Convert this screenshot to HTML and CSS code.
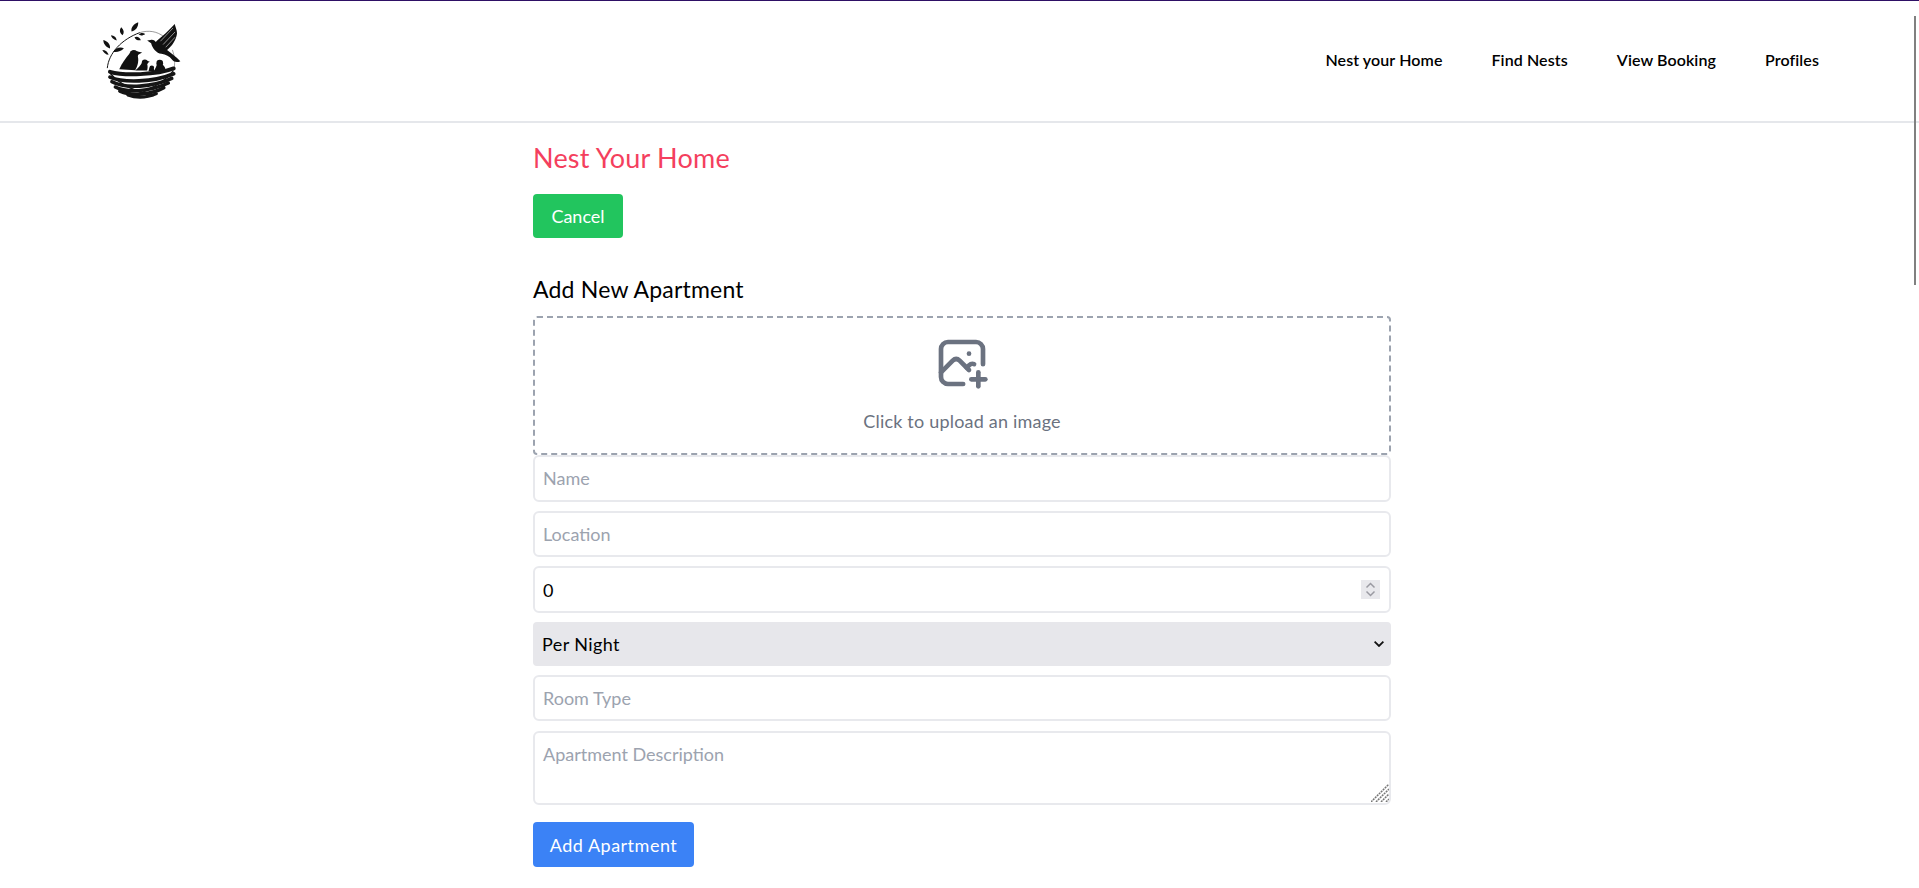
FILE: index.html
```html
<!DOCTYPE html>
<html lang="en">
<head>
    <meta charset="UTF-8">
    <meta name="viewport" content="width=device-width, initial-scale=1.0">
    <title>Nest Your Home</title>
    <link rel="stylesheet" href="styles.css">
</head>
<body>
    <div class="scroll-thumb"></div>
    <header class="site-header">
        <a class="logo" href="#">
            <svg viewBox="120 60 250 250" width="83" height="83">
                <!-- branch and circle outline -->
                <path d="M142 205C146 160 185 118 240 98" fill="none" stroke="#111" stroke-width="3"/>
                <path d="M240 98C266 90 292 94 312 110" fill="none" stroke="#333" stroke-width="1.5"/>
                <path d="M338 150C345 170 347 190 342 212" fill="none" stroke="#444" stroke-width="1.5"/>
                <g fill="#111">
                    <path d="M215 95C212 82 222 72 235 67C236 80 228 92 215 95Z"/>
                    <path d="M188 106C178 98 178 90 184 82C192 90 194 98 188 106Z"/>
                    <path d="M170 122C160 118 154 112 153 106C162 107 170 112 170 122Z"/>
                    <path d="M150 146C136 140 130 130 130 120C142 124 152 132 150 146Z"/>
                    <path d="M146 165C138 164 130 158 127 150C136 150 144 156 146 165Z"/>
                    <path d="M160 156C166 146 178 140 192 145C184 154 172 158 160 156Z"/>
                    <path d="M224 112C232 108 240 112 243 121C234 122 227 120 224 112Z"/>
                    <path d="M236 104C242 98 250 98 256 102C250 107 242 108 236 104Z"/>
                    <!-- flying bird -->
                    <path d="M262 122L272 120C278 118 284 120 288 126C298 116 320 100 345 72C346 78 352 90 352 100C350 120 336 140 322 150C332 158 350 170 362 184C350 190 340 184 336 178C330 170 318 164 305 162C290 160 278 146 274 130Z"/>
                    <!-- parent -->
                    <circle cx="222" cy="163" r="13"/>
                    <path d="M230 154L247 158L231 167Z"/>
                    <path d="M210 160C198 174 186 190 178 208L226 211C236 194 237 178 233 168Z"/>
                    <!-- chicks -->
                    <circle cx="255" cy="188" r="9"/>
                    <path d="M260 182L270 186L260 192Z"/>
                    <path d="M248 186C242 198 234 206 226 212H262C264 204 264 198 262 194Z"/>
                    <circle cx="276" cy="204" r="7"/>
                    <path d="M269 204L266 214H284L282 206Z"/>
                    <circle cx="300" cy="190" r="10"/>
                    <path d="M292 192C290 200 286 208 282 214H318C318 206 314 198 308 194Z"/>
                </g>
                <g fill="none" stroke="#fff" stroke-width="1.6">
                    <path d="M302 124L340 84"/>
                    <path d="M310 134L346 96"/>
                    <path d="M318 142L346 112"/>
                </g>
                <!-- nest -->
                <g fill="none" stroke="#151515" stroke-linecap="round">
                    <path d="M150 216C190 228 290 226 342 206" stroke-width="12"/>
                    <path d="M150 232C190 250 280 248 342 222" stroke-width="11"/>
                    <path d="M156 246C196 268 280 262 336 236" stroke-width="11"/>
                    <path d="M166 262C200 280 270 276 326 250" stroke-width="10"/>
                    <path d="M180 274C220 292 280 282 312 264" stroke-width="11"/>
                    <path d="M204 286C230 296 262 294 290 282" stroke-width="9"/>
                    <path d="M152 222C180 256 230 276 280 288" stroke-width="4"/>
                    <path d="M340 214C310 250 260 276 220 288" stroke-width="4"/>
                </g>
            </svg>
        </a>
        <nav class="nav-links">
            <a href="#">Nest your Home</a>
            <a href="#">Find Nests</a>
            <a href="#">View Booking</a>
            <a href="#">Profiles</a>
        </nav>
    </header>

    <main class="container">
        <h1 class="page-title">Nest Your Home</h1>
        <button class="btn btn-green" type="button">Cancel</button>

        <h2 class="form-title">Add New Apartment</h2>
        <form class="apartment-form">
            <label class="upload-box">
                <svg class="upload-icon" viewBox="0 0 24 24" fill="none" stroke="currentColor" stroke-width="2" stroke-linecap="round" stroke-linejoin="round">
                    <path d="M15 8h.01"/>
                    <path d="M12.5 21h-6.5a3 3 0 0 1 -3 -3v-12a3 3 0 0 1 3 -3h12a3 3 0 0 1 3 3v6.5"/>
                    <path d="M3 16l5 -5c.928 -.893 2.072 -.893 3 0l4 4"/>
                    <path d="M14 14l1 -1c.67 -.644 1.45 -.824 2.182 -.54"/>
                    <path d="M16 19h6"/>
                    <path d="M19 16v6"/>
                </svg>
                <span>Click to upload an image</span>
            </label>
            <input class="field" type="text" placeholder="Name">
            <input class="field" type="text" placeholder="Location">
            <div class="field-wrap">
                <input class="field field-number" type="number" value="0">
                <span class="spinner">
                    <svg viewBox="0 0 19 19" width="19" height="19" fill="none" stroke="#9a9aa2" stroke-width="1.5">
                        <path d="M5.5 7.5L9.5 3.5L13.5 7.5"/>
                        <path d="M5.5 11.5L9.5 15.5L13.5 11.5"/>
                    </svg>
                </span>
            </div>
            <div class="field-wrap">
                <select class="field-select">
                    <option>Per Night</option>
                    <option>Per Month</option>
                </select>
                <svg class="select-arrow" viewBox="0 0 10 6" width="10" height="6" fill="none" stroke="#111" stroke-width="1.8">
                    <path d="M0.6 0.7L5 5L9.4 0.7"/>
                </svg>
            </div>
            <input class="field" type="text" placeholder="Room Type">
            <div class="field-wrap area-wrap">
                <textarea class="field field-area" placeholder="Apartment Description"></textarea>
                <svg class="area-grip" viewBox="0 0 18 18" width="18" height="18" fill="none" stroke="#777" stroke-width="1.5" stroke-dasharray="2 0.8">
                    <path d="M0 18L18 0"/>
                    <path d="M5 18L18 5"/>
                    <path d="M10 18L18 10"/>
                    <path d="M15 18L18 15"/>
                </svg>
            </div>
            <button class="btn btn-blue" type="button">Add Apartment</button>
        </form>
    </main>
</body>
</html>
```

FILE: styles.css
```css
* {
    box-sizing: border-box;
}

body {
    margin: 0;
    min-height: 2880px;
    background: white;
    color: black;
    font-family: "Lato", "Noto Sans", sans-serif;
    font-size: 18px;
    letter-spacing: 0.2px;
    border-top: 1px solid #2e1065;
}

.scroll-thumb {
    position: fixed;
    top: 16px;
    right: 3px;
    width: 2px;
    height: 269px;
    background: #808080;
}

.site-header {
    display: flex;
    align-items: center;
    justify-content: space-between;
    height: 122px;
    padding: 0 100px 2px 100px;
    border-bottom: 2px solid #e5e7eb;
}

.logo {
    display: block;
    height: 83px;
    margin-top: 2px;
}

.logo svg {
    filter: blur(0.4px);
}

.nav-links {
    display: flex;
    gap: 49px;
    margin-bottom: 2px;
}

.nav-links a {
    color: black;
    text-decoration: none;
    font-size: 16px;
    font-weight: 600;
    letter-spacing: 0.1px;
}

.container {
    width: 858px;
    margin-left: 533px;
    padding-top: 19px;
}

.page-title {
    margin: 0;
    color: #f43f5e;
    font-size: 27px;
    font-weight: 400;
    line-height: 32px;
}

.btn {
    display: block;
    padding: 0;
    border: none;
    border-radius: 4px;
    color: white;
    font: inherit;
}

.btn-green {
    width: 90px;
    height: 44px;
    margin-top: 20px;
    background: #22c55e;
}

.btn-blue {
    width: 161px;
    height: 45px;
    margin-top: 8px;
    background: #3b82f6;
    letter-spacing: 0.5px;
}

.form-title {
    margin: 39px 0 15px;
    font-size: 23px;
    font-weight: 400;
    line-height: 24px;
}

.apartment-form {
    display: flex;
    flex-direction: column;
    gap: 9px;
}

.upload-box {
    display: flex;
    flex-direction: column;
    align-items: center;
    height: 139px;
    margin-bottom: -9px;
    padding-top: 17px;
    border: 2px dashed #9ca3af;
    border-radius: 4px;
    color: #6b7280;
}

.upload-icon {
    width: 56px;
    height: 56px;
}

.upload-box span {
    margin-top: 19px;
}

.field {
    display: block;
    width: 100%;
    height: 46.5px;
    padding: 0 8px;
    border: 2px solid #e8e9ed;
    border-radius: 6px;
    color: black;
    font: inherit;
    outline: none;
}

.field::placeholder {
    color: #9ca3af;
}

.field-wrap {
    position: relative;
}

.field-number {
    height: 47px;
    appearance: textfield;
}

.spinner {
    position: absolute;
    top: 14px;
    right: 11px;
    width: 19px;
    height: 19px;
    background: #e8e8ec;
}

.spinner svg {
    display: block;
}

.field-select {
    display: block;
    width: 100%;
    height: 43.5px;
    padding: 0 9px;
    border: none;
    border-radius: 4px;
    background: #e7e7eb;
    color: black;
    font: inherit;
    letter-spacing: 0.4px;
    appearance: none;
}

.select-arrow {
    position: absolute;
    top: 19px;
    right: 7px;
}

.area-wrap {
    margin-top: 1px;
}

.field-area {
    height: 74px;
    padding: 10px 8px;
    resize: none;
}

.area-grip {
    position: absolute;
    right: 2px;
    bottom: 3px;
}
```
